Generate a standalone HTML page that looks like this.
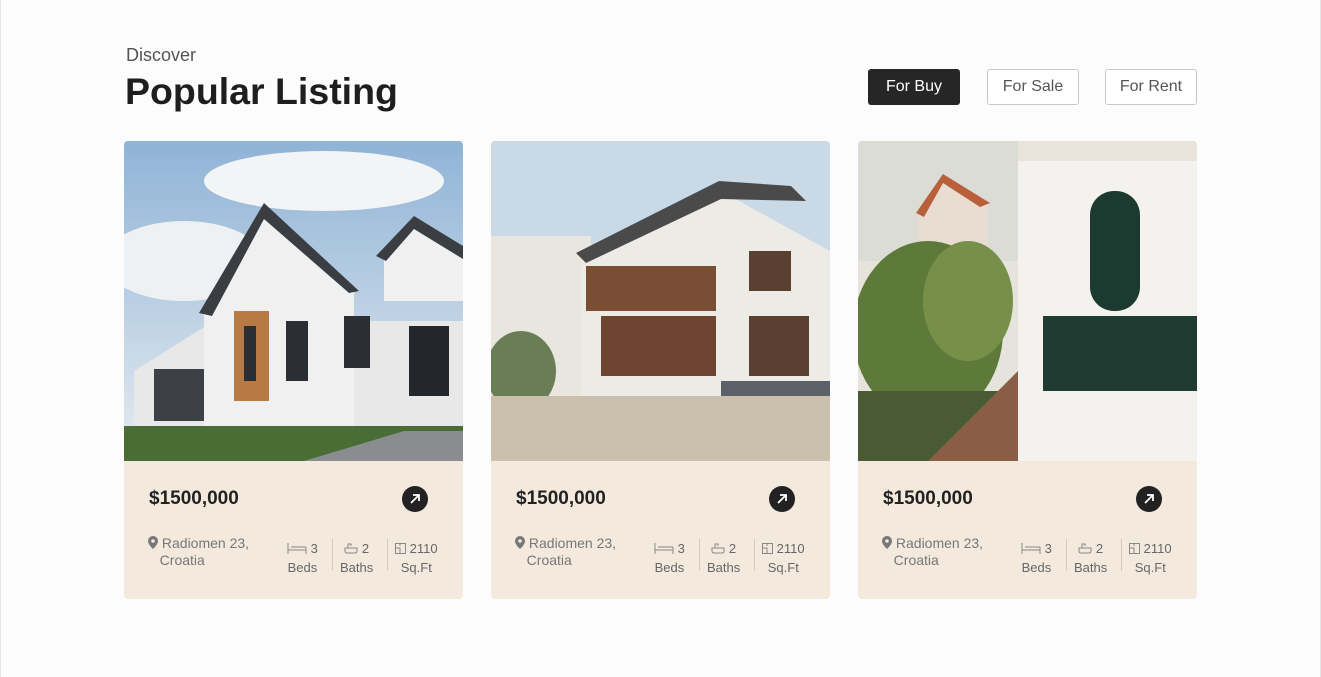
<!DOCTYPE html>
<html><head><meta charset="utf-8"><style>
*{margin:0;padding:0;box-sizing:border-box}
body{width:1321px;height:677px;background:#fcfcfc;font-family:"Liberation Sans",sans-serif;position:relative;overflow:hidden;border-left:1px solid #e4e4e4;border-right:1px solid #e4e4e4}
.abs{position:absolute}
.disc{left:125px;top:45px;font-size:18px;color:#555}
h1{position:absolute;left:124px;top:70px;font-size:37.5px;font-weight:bold;color:#1e1e1e}
.btn{position:absolute;top:69px;height:36px;width:92px;border:1px solid #c9c9c9;border-radius:3px;font-size:16px;color:#555;display:flex;align-items:center;justify-content:center;background:#fff}
.btn.on{background:#262626;color:#fff;border-color:#262626}
.card{position:absolute;top:141px;width:339px;height:458px;border-radius:4px;overflow:hidden;background:#f3eadd}
.card svg.img{position:absolute;left:0;top:0;width:339px;height:320px}
.price{position:absolute;left:25px;top:347px;font-size:19px;font-weight:bold;color:#222}
.arr{position:absolute;left:278px;top:345px;width:26px;height:26px;border-radius:50%;background:#222}
.loc{position:absolute;left:24px;top:394px;font-size:14px;color:#777;line-height:17px}
.loc svg{vertical-align:-1px}
.st{position:absolute;top:398px;font-size:13px;color:#666;text-align:center;line-height:19px}
.st svg{vertical-align:-1px}
.dv{position:absolute;top:398px;width:1px;height:32px;background:#d3cabd}
</style></head><body>
<div class="abs disc">Discover</div>
<h1>Popular Listing</h1>
<div class="btn on" style="left:867px">For Buy</div>
<div class="btn" style="left:986px">For Sale</div>
<div class="btn" style="left:1104px">For Rent</div>

<!-- card 1 -->
<div class="card" style="left:123px">
<svg class="img" viewBox="0 0 339 320">
<defs><linearGradient id="s1" x1="0" y1="0" x2="0" y2="1"><stop offset="0" stop-color="#8fb3d6"/><stop offset="1" stop-color="#e6ecf1"/></linearGradient></defs>
<rect width="339" height="320" fill="url(#s1)"/>
<ellipse cx="200" cy="40" rx="120" ry="30" fill="#f2f4f6"/><ellipse cx="60" cy="120" rx="80" ry="40" fill="#eef1f4"/>
<polygon points="10,230 90,180 340,180 340,290 10,290" fill="#e8e8e8"/>
<polygon points="80,170 140,68 230,150 230,290 80,290" fill="#f0f0f0"/>
<polygon points="75,172 140,62 235,150 225,152 140,78 88,175" fill="#3a3d42"/>
<polygon points="260,110 290,78 339,108 339,160 260,160" fill="#f0f0f0"/>
<polygon points="252,115 290,75 339,105 339,118 290,88 262,120" fill="#3a3d42"/>
<rect x="110" y="170" width="35" height="90" fill="#b87a45"/>
<rect x="120" y="185" width="12" height="55" fill="#2b2e33"/>
<rect x="162" y="180" width="22" height="60" fill="#2b2e33"/><rect x="220" y="175" width="26" height="52" fill="#2b2e33"/>
<rect x="285" y="185" width="40" height="70" fill="#23262a"/>
<rect x="30" y="228" width="50" height="52" fill="#3d4045"/>
<rect x="0" y="285" width="339" height="35" fill="#496d35"/>
<polygon points="180,320 280,290 339,290 339,320" fill="#8a8d90"/>
</svg>
<div class="price">$1500,000</div>
<div class="arr"><svg width="26" height="26"><path d="M9 17L17 9M11 9H17V15" stroke="#fff" stroke-width="1.8" fill="none"/></svg></div>
<div class="loc"><svg width="10" height="13" viewBox="0 0 10 13"><path d="M5 0a5 5 0 0 0-5 5c0 3.5 5 8 5 8s5-4.5 5-8a5 5 0 0 0-5-5z" fill="#777"/><circle cx="5" cy="5" r="1.8" fill="#f3eadd"/></svg> Radiomen 23,<br>&nbsp;&nbsp;&nbsp;Croatia</div>
<div class="st" style="left:163px"><svg width="20" height="12"><path d="M1 1V12M19 5V12M1 8H19M4 5H19" stroke="#888" fill="none"/></svg> 3<br>Beds</div><div class="dv" style="left:208px"></div>
<div class="st" style="left:216px"><svg width="14" height="12"><path d="M1 6H13V9Q13 11 11 11H3Q1 11 1 9ZM4 6V2H7V4" stroke="#888" fill="none"/></svg> 2<br>Baths</div><div class="dv" style="left:263px"></div>
<div class="st" style="left:271px"><svg width="11" height="11"><path d="M.5.5H10.5V10.5H.5ZM.5 5H5V10.5M5 .5V3" stroke="#888" fill="none"/></svg> 2110<br>Sq.Ft</div>
</div>

<!-- card 2 -->
<div class="card" style="left:490px">
<svg class="img" viewBox="0 0 339 320">
<rect width="339" height="320" fill="#c9d9e6"/>
<rect x="0" y="95" width="100" height="160" fill="#e9e6e0"/>
<polygon points="90,110 230,50 339,110 339,260 90,260" fill="#ecebe6"/>
<polygon points="85,112 228,40 300,45 315,60 230,58 95,122" fill="#4a4a4a"/>
<rect x="95" y="125" width="130" height="45" fill="#7a4e34"/><rect x="110" y="175" width="115" height="60" fill="#6d4530"/>
<rect x="258" y="110" width="42" height="40" fill="#5a4030"/><rect x="258" y="175" width="60" height="60" fill="#5a4030"/>
<rect x="230" y="240" width="109" height="25" fill="#5c6068"/>
<ellipse cx="30" cy="230" rx="35" ry="40" fill="#6a7e55"/>
<rect x="0" y="255" width="339" height="65" fill="#cbbfae"/>
</svg>
<div class="price">$1500,000</div>
<div class="arr"><svg width="26" height="26"><path d="M9 17L17 9M11 9H17V15" stroke="#fff" stroke-width="1.8" fill="none"/></svg></div>
<div class="loc"><svg width="10" height="13" viewBox="0 0 10 13"><path d="M5 0a5 5 0 0 0-5 5c0 3.5 5 8 5 8s5-4.5 5-8a5 5 0 0 0-5-5z" fill="#777"/><circle cx="5" cy="5" r="1.8" fill="#f3eadd"/></svg> Radiomen 23,<br>&nbsp;&nbsp;&nbsp;Croatia</div>
<div class="st" style="left:163px"><svg width="20" height="12"><path d="M1 1V12M19 5V12M1 8H19M4 5H19" stroke="#888" fill="none"/></svg> 3<br>Beds</div><div class="dv" style="left:208px"></div>
<div class="st" style="left:216px"><svg width="14" height="12"><path d="M1 6H13V9Q13 11 11 11H3Q1 11 1 9ZM4 6V2H7V4" stroke="#888" fill="none"/></svg> 2<br>Baths</div><div class="dv" style="left:263px"></div>
<div class="st" style="left:271px"><svg width="11" height="11"><path d="M.5.5H10.5V10.5H.5ZM.5 5H5V10.5M5 .5V3" stroke="#888" fill="none"/></svg> 2110<br>Sq.Ft</div>
</div>

<!-- card 3 -->
<div class="card" style="left:857px">
<svg class="img" viewBox="0 0 339 320">
<rect width="339" height="320" fill="#e6e2dc"/>
<rect x="0" y="0" width="160" height="120" fill="#dcdcd6"/>
<polygon points="60,70 85,35 130,60 130,140 60,140" fill="#e8ddd0"/>
<polygon points="58,72 85,33 132,62 122,66 85,42 66,76" fill="#b8603a"/>
<ellipse cx="70" cy="190" rx="75" ry="90" fill="#5d7a3a"/>
<ellipse cx="110" cy="160" rx="45" ry="60" fill="#76904a"/>
<rect x="0" y="250" width="160" height="70" fill="#4a5a34"/>
<polygon points="70,320 160,230 160,320" fill="#8a5e44"/>
<rect x="160" y="0" width="179" height="320" fill="#f4f2ee"/>
<rect x="232" y="50" width="50" height="120" rx="24" fill="#1d3a30"/>
<rect x="185" y="175" width="154" height="75" fill="#1f3b32"/>
<rect x="160" y="0" width="179" height="20" fill="#e8e4dc"/>
</svg>
<div class="price">$1500,000</div>
<div class="arr"><svg width="26" height="26"><path d="M9 17L17 9M11 9H17V15" stroke="#fff" stroke-width="1.8" fill="none"/></svg></div>
<div class="loc"><svg width="10" height="13" viewBox="0 0 10 13"><path d="M5 0a5 5 0 0 0-5 5c0 3.5 5 8 5 8s5-4.5 5-8a5 5 0 0 0-5-5z" fill="#777"/><circle cx="5" cy="5" r="1.8" fill="#f3eadd"/></svg> Radiomen 23,<br>&nbsp;&nbsp;&nbsp;Croatia</div>
<div class="st" style="left:163px"><svg width="20" height="12"><path d="M1 1V12M19 5V12M1 8H19M4 5H19" stroke="#888" fill="none"/></svg> 3<br>Beds</div><div class="dv" style="left:208px"></div>
<div class="st" style="left:216px"><svg width="14" height="12"><path d="M1 6H13V9Q13 11 11 11H3Q1 11 1 9ZM4 6V2H7V4" stroke="#888" fill="none"/></svg> 2<br>Baths</div><div class="dv" style="left:263px"></div>
<div class="st" style="left:271px"><svg width="11" height="11"><path d="M.5.5H10.5V10.5H.5ZM.5 5H5V10.5M5 .5V3" stroke="#888" fill="none"/></svg> 2110<br>Sq.Ft</div>
</div>
</body></html>
